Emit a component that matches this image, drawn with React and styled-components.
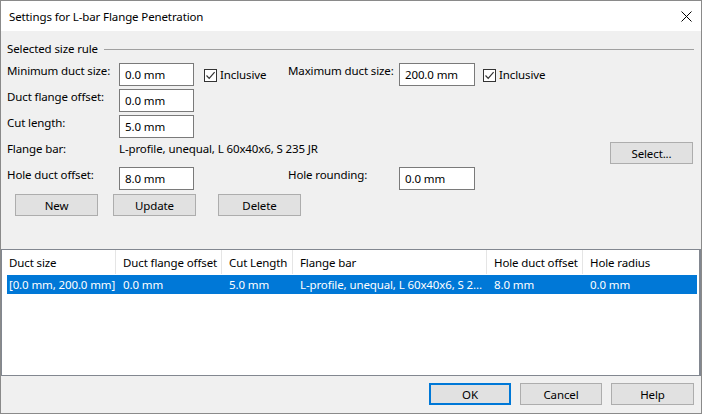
import React from 'react';
import styled, { createGlobalStyle } from 'styled-components';

const GlobalStyle = createGlobalStyle`
  * { box-sizing: border-box; }
  html, body { margin: 0; padding: 0; background: #fff; }
  body {
    font-family: 'Noto Sans', 'Open Sans', sans-serif;
    font-size: 11.5px;
    letter-spacing: -0.12px;
    color: #000;
  }
`;

const Window = styled.div`
  width: 702px;
  height: 414px;
  border: 1px solid #8a8a8a;
  display: flex;
  flex-direction: column;
  background: #f0f0f0;
  overflow: hidden;
`;

const TitleBar = styled.div`
  height: 30px;
  flex: 0 0 30px;
  background: #fff;
  display: flex;
  align-items: center;
  justify-content: space-between;
  padding: 0 9px 0 8px;
`;

const CloseButton = styled.div`
  width: 12px;
  height: 12px;
  display: flex;
  align-items: center;
  justify-content: center;
`;

const Settings = styled.div`
  flex: 0 0 218px;
  padding: 10px 7px 0 6px;
`;

const GroupHeader = styled.div`
  display: flex;
  align-items: center;
  gap: 6px;
  height: 16px;
  line-height: 16px;
  margin-bottom: 5px;

  &::after {
    content: '';
    flex: 1;
    height: 1px;
    background: #a0a0a0;
    margin-top: 1px;
  }
`;

const FormGrid = styled.div`
  display: grid;
  grid-template-columns: 112px 75px 10px 84px 111px 76px 8px 127px 83px;
  grid-auto-rows: 26px;
`;

const Label = styled.div`
  grid-column: ${p => p.col || 1};
  padding-top: 1px;
  line-height: 16px;
  white-space: nowrap;
`;

const Value = styled.div`
  grid-column: 2 / 8;
  padding-top: 1px;
  line-height: 16px;
  white-space: nowrap;
`;

const Input = styled.div`
  grid-column: ${p => p.col || 2};
  margin-top: 1px;
  height: 23px;
  background: #fff;
  border: 1px solid #7a7a7a;
  padding: 0 5px;
  display: flex;
  align-items: center;
  line-height: 16px;
`;

const CheckLabel = styled.label`
  grid-column: ${p => p.col || 4};
  display: flex;
  align-items: center;
  gap: 3px;
  line-height: 16px;
`;

const Box = styled.span`
  width: 13px;
  height: 13px;
  background: #fff;
  border: 1px solid #333;
  display: flex;
  align-items: center;
  justify-content: center;
`;

const Button = styled.button`
  font: inherit;
  letter-spacing: inherit;
  color: #000;
  height: 22px;
  width: ${p => p.w || 83}px;
  background: #e1e1e1;
  border: ${p => (p.primary ? '2px solid #0078d7' : '1px solid #adadad')};
  padding: 0;
  margin: 0;
`;

const SelectButton = styled(Button)`
  grid-column: 9;
  margin-top: 2px;
`;

const ActionRow = styled.div`
  display: flex;
  padding-left: 8px;
  margin-top: 2px;
  gap: 15px;

  & > :last-child {
    margin-left: 7px;
  }
`;

const List = styled.div`
  flex: 1;
  background: #fff;
  border: 1px solid #828790;
  border-right-width: 2px;
`;

const HeaderRow = styled.div`
  display: grid;
  grid-template-columns: 114px 106px 71px 194px 96px 1fr;
  height: 24px;
`;

const HeaderCell = styled.div`
  padding-left: 7px;
  display: flex;
  align-items: center;
  border-right: ${p => (p.last ? 'none' : '1px solid #e5e5e5')};
  white-space: nowrap;
`;

const DataRow = styled.div`
  display: grid;
  grid-template-columns: 109px 106px 71px 194px 96px 1fr;
  height: 19px;
  margin: 1px 2px 0 5px;
  background: ${p => (p.selected ? '#0078d7' : 'transparent')};
  color: ${p => (p.selected ? '#fff' : '#000')};
`;

const DataCell = styled.div`
  padding-left: ${p => (p.first ? 2 : 7)}px;
  padding-right: 3px;
  display: flex;
  align-items: center;
  white-space: nowrap;
  min-width: 0;
  overflow: ${p => (p.clip ? 'hidden' : 'visible')};

  & > span {
    overflow: ${p => (p.clip ? 'hidden' : 'visible')};
    text-overflow: ellipsis;
  }
`;

const Footer = styled.div`
  flex: 0 0 37px;
  display: flex;
  justify-content: flex-end;
  gap: 9px;
  padding: 7px 7px 0 0;
`;

function Check() {
  return (
    <Box>
      <svg width="11" height="11" viewBox="0 0 11 11">
        <path d="M1.5 5.5 L4.2 8.3 L9.6 2.2" fill="none" stroke="#333" strokeWidth="1.2" />
      </svg>
    </Box>
  );
}

const columns = ['Duct size', 'Duct flange offset', 'Cut Length', 'Flange bar', 'Hole duct offset', 'Hole radius'];
const rows = [
  ['[0.0 mm, 200.0 mm]', '0.0 mm', '5.0 mm', 'L-profile, unequal, L 60x40x6, S 235 JR', '8.0 mm', '0.0 mm'],
];

export default function App() {
  return (
    <>
      <GlobalStyle />
      <Window>
        <TitleBar>
          <span>Settings for L-bar Flange Penetration</span>
          <CloseButton>
            <svg width="11" height="11" viewBox="0 0 11 11">
              <path d="M0.5 0.5 L10.5 10.5 M10.5 0.5 L0.5 10.5" stroke="#000" strokeWidth="1" />
            </svg>
          </CloseButton>
        </TitleBar>

        <Settings>
          <GroupHeader>Selected size rule</GroupHeader>
          <FormGrid>
            <Label>Minimum duct size:</Label>
            <Input>0.0 mm</Input>
            <CheckLabel col={4}><Check />Inclusive</CheckLabel>
            <Label col={5}>Maximum duct size:</Label>
            <Input col={6}>200.0 mm</Input>
            <CheckLabel col={8}><Check />Inclusive</CheckLabel>

            <Label>Duct flange offset:</Label>
            <Input>0.0 mm</Input>

            <Label>Cut length:</Label>
            <Input>5.0 mm</Input>

            <Label>Flange bar:</Label>
            <Value>L-profile, unequal, L 60x40x6, S 235 JR</Value>
            <SelectButton>Select...</SelectButton>

            <Label>Hole duct offset:</Label>
            <Input>8.0 mm</Input>
            <Label col={5}>Hole rounding:</Label>
            <Input col={6}>0.0 mm</Input>
          </FormGrid>
          <ActionRow>
            <Button>New</Button>
            <Button>Update</Button>
            <Button>Delete</Button>
          </ActionRow>
        </Settings>

        <List>
          <HeaderRow>
            {columns.map((c, i) => (
              <HeaderCell key={c} last={i === columns.length - 1}>{c}</HeaderCell>
            ))}
          </HeaderRow>
          {rows.map((r, ri) => (
            <DataRow key={ri} selected>
              {r.map((v, i) => (
                <DataCell key={i} first={i === 0} clip={i === 3}><span>{v}</span></DataCell>
              ))}
            </DataRow>
          ))}
        </List>

        <Footer>
          <Button primary w={82}>OK</Button>
          <Button w={82}>Cancel</Button>
          <Button w={83}>Help</Button>
        </Footer>
      </Window>
    </>
  );
}
